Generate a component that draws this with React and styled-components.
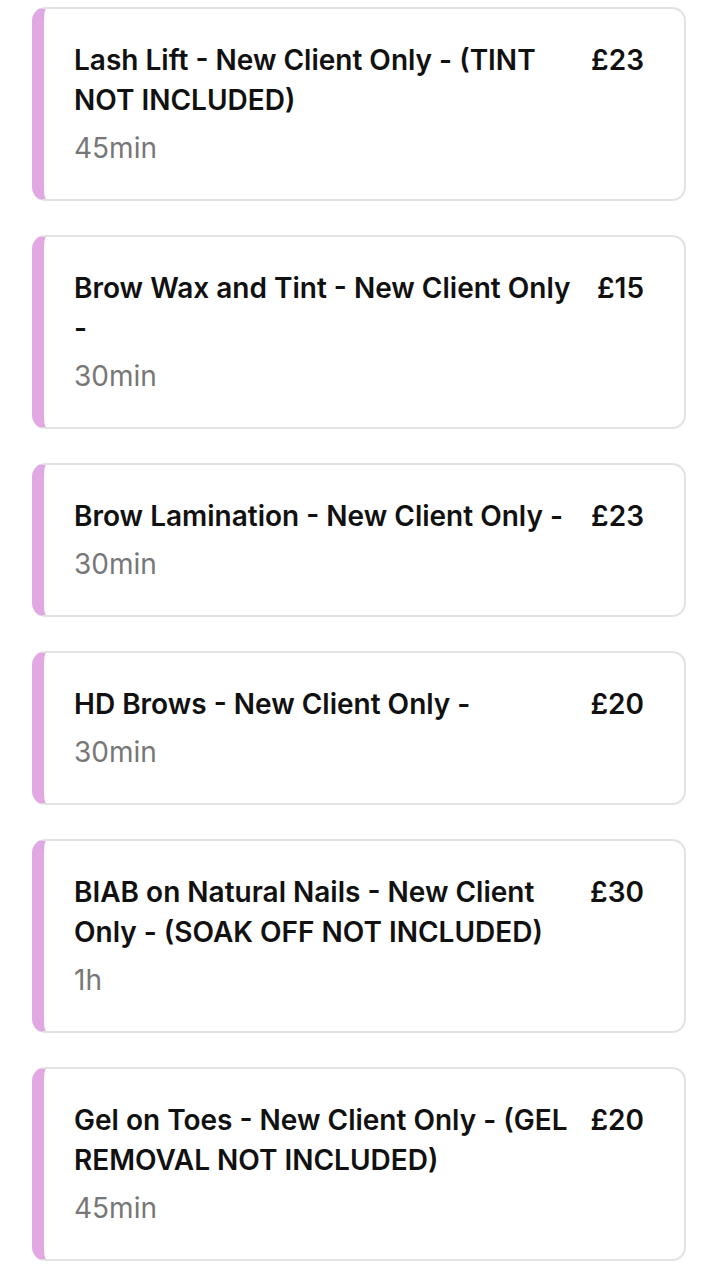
import React from "react";
import styled, { createGlobalStyle } from "styled-components";

const Global = createGlobalStyle`
  html, body { margin: 0; padding: 0; background: #ffffff; }
  body { font-family: Inter, "Noto Sans", sans-serif; -webkit-font-smoothing: antialiased; }
`;

const List = styled.div`
  display: flex;
  flex-direction: column;
  gap: 34px;
  padding: 7px 33px 7px 32px;
`;

const Card = styled.div`
  display: flex;
  align-items: flex-start;
  gap: 16px;
  background: #fff;
  border: 2px solid #e2e2e2;
  border-left: 12px solid #e2a8e3;
  border-radius: 14px;
  padding: 31px 40px 31px 30px;
`;

const Info = styled.div`
  flex: 1;
  min-width: 0;
  display: flex;
  flex-direction: column;
  gap: 8px;
`;

const Title = styled.div`
  font-size: 28px;
  line-height: 40px;
  font-weight: 600;
  color: #111111;
  letter-spacing: 0;
`;

const Duration = styled.div`
  font-size: 28px;
  line-height: 40px;
  font-weight: 400;
  color: #777777;
  letter-spacing: 0;
`;

const Price = styled.div`
  font-size: 28px;
  line-height: 40px;
  font-weight: 600;
  color: #111111;
  white-space: nowrap;
`;

const services = [
  { name: "Lash Lift - New Client Only - (TINT NOT INCLUDED)", time: "45min", price: "£23" },
  { name: "Brow Wax and Tint - New Client Only -", time: "30min", price: "£15" },
  { name: "Brow Lamination - New Client Only -", time: "30min", price: "£23" },
  { name: "HD Brows - New Client Only -", time: "30min", price: "£20" },
  { name: "BIAB on Natural Nails - New Client Only - (SOAK OFF NOT INCLUDED)", time: "1h", price: "£30" },
  { name: "Gel on Toes - New Client Only - (GEL REMOVAL NOT INCLUDED)", time: "45min", price: "£20" },
];

export default function App() {
  return (
    <>
      <Global />
      <List>
        {services.map((s) => (
          <Card key={s.name}>
            <Info>
              <Title>{s.name}</Title>
              <Duration>{s.time}</Duration>
            </Info>
            <Price>{s.price}</Price>
          </Card>
        ))}
      </List>
    </>
  );
}
